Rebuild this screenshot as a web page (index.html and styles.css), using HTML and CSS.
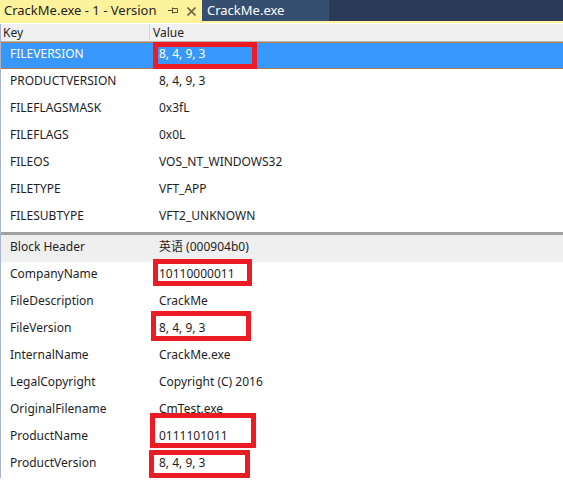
FILE: index.html
```html
<!DOCTYPE html>
<html>
<head>
<meta charset="utf-8">
<link rel="stylesheet" href="styles.css">
</head>
<body>
<div class="tabs">
  <div class="tab active">
    <span class="tab-title">CrackMe.exe - 1 - Version</span>
    <svg class="pin" width="10" height="8" viewBox="0 0 10 8"><path d="M0 3.5H4M4.5 0.5V6.5M4.5 1.5H9.5V5.5H4.5" fill="none" stroke="#5a5030" stroke-width="1"/></svg>
    <svg class="close" width="9" height="9" viewBox="0 0 9 9"><path d="M0.5 0.5L8.5 8.5M8.5 0.5L0.5 8.5" stroke="#6b6448" stroke-width="1.6"/></svg>
  </div>
  <div class="tab inactive"><span class="tab-title">CrackMe.exe</span></div>
</div>
<div class="accent"></div>
<div class="list">
  <div class="header"><div class="k">Key</div><div class="v">Value</div></div>
  <div class="row sel"><div class="k">FILEVERSION</div><div class="v">8, 4, 9, 3<span class="mark m1"></span></div></div>
  <div class="row"><div class="k">PRODUCTVERSION</div><div class="v">8, 4, 9, 3</div></div>
  <div class="row"><div class="k">FILEFLAGSMASK</div><div class="v">0x3fL</div></div>
  <div class="row"><div class="k">FILEFLAGS</div><div class="v">0x0L</div></div>
  <div class="row"><div class="k">FILEOS</div><div class="v">VOS_NT_WINDOWS32</div></div>
  <div class="row"><div class="k">FILETYPE</div><div class="v">VFT_APP</div></div>
  <div class="row"><div class="k">FILESUBTYPE</div><div class="v">VFT2_UNKNOWN</div></div>
  <div class="sep"></div>
  <div class="row block"><div class="k">Block Header</div><div class="v">英语 (000904b0)</div></div>
  <div class="row"><div class="k">CompanyName</div><div class="v">10110000011<span class="mark m2"></span></div></div>
  <div class="row"><div class="k">FileDescription</div><div class="v">CrackMe</div></div>
  <div class="row"><div class="k">FileVersion</div><div class="v">8, 4, 9, 3<span class="mark m3"></span></div></div>
  <div class="row"><div class="k">InternalName</div><div class="v">CrackMe.exe</div></div>
  <div class="row"><div class="k">LegalCopyright</div><div class="v">Copyright (C) 2016</div></div>
  <div class="row"><div class="k">OriginalFilename</div><div class="v">CmTest.exe</div></div>
  <div class="row"><div class="k">ProductName</div><div class="v">0111101011<span class="mark m4"></span></div></div>
  <div class="row"><div class="k">ProductVersion</div><div class="v">8, 4, 9, 3<span class="mark m5"></span></div></div>
</div>
</body>
</html>
```

FILE: styles.css
```css
html, body {
  margin: 0;
  padding: 0;
  background: #ffffff;
  overflow: hidden;
}
body {
  width: 563px;
  height: 481px;
  font-family: "Noto Sans", "Noto Sans CJK SC", sans-serif;
  font-size: 12px;
  color: #1e1e1e;
}
.tabs {
  display: flex;
  height: 21px;
  background: #2b3a56;
}
.tab {
  display: flex;
  align-items: center;
  height: 21px;
  box-sizing: border-box;
  font-size: 13px;
}
.tab.active {
  width: 202px;
  background: #fff29d;
  color: #1e1e1e;
  padding-left: 4px;
}
.tab.inactive {
  width: 127px;
  background: #364e6f;
  color: #ffffff;
  padding-left: 5px;
}
.tab-title {
  white-space: nowrap;
  line-height: 21px;
  margin-top: -1px;
}
.pin {
  margin-left: 12px;
  margin-top: 1px;
}
.close {
  margin-left: 9px;
  margin-top: 2px;
}
.accent {
  height: 2px;
  background: #fff29d;
  border-bottom: 1px solid #ffffff;
}
.list {
  border-left: 1px solid #a9b5cd;
}
.header {
  display: grid;
  grid-template-columns: 149px 1fr;
  height: 18px;
  background: #f0f0f0;
  border-bottom: 1px solid #b9b9b9;
  box-sizing: border-box;
  line-height: 17px;
}
.header .k {
  padding-left: 2px;
  border-right: 1px solid #d5d5d5;
}
.header .v {
  padding-left: 3px;
}
.row {
  display: grid;
  grid-template-columns: 149px 1fr;
  height: 27px;
  line-height: 23px;
}
.row .k {
  padding-left: 9px;
  white-space: nowrap;
}
.row .v {
  padding-left: 9px;
  position: relative;
  white-space: nowrap;
}
.row.sel {
  background: #3797fa;
  color: #ffffff;
  border-top: 1px dotted #b58048;
  border-bottom: 1px dotted #b58048;
  box-sizing: border-box;
  line-height: 21px;
}
.row.block {
  background: #efefef;
}
.sep {
  height: 3px;
  margin-top: 1px;
  background: #a0a0a0;
}
.mark {
  position: absolute;
  border: 5px solid #ed1c24;
  box-sizing: border-box;
}
.m1 { left: 3px; top: -1px; width: 104px; height: 27px; }
.m2 { left: 3px; top: -3px; width: 99px; height: 27px; }
.m3 { left: 1px; top: -5px; width: 100px; height: 30px; }
.m4 { left: 0px; top: -11px; width: 106px; height: 35px; }
.m5 { left: -1px; top: -1px; width: 101px; height: 28px; }
```
